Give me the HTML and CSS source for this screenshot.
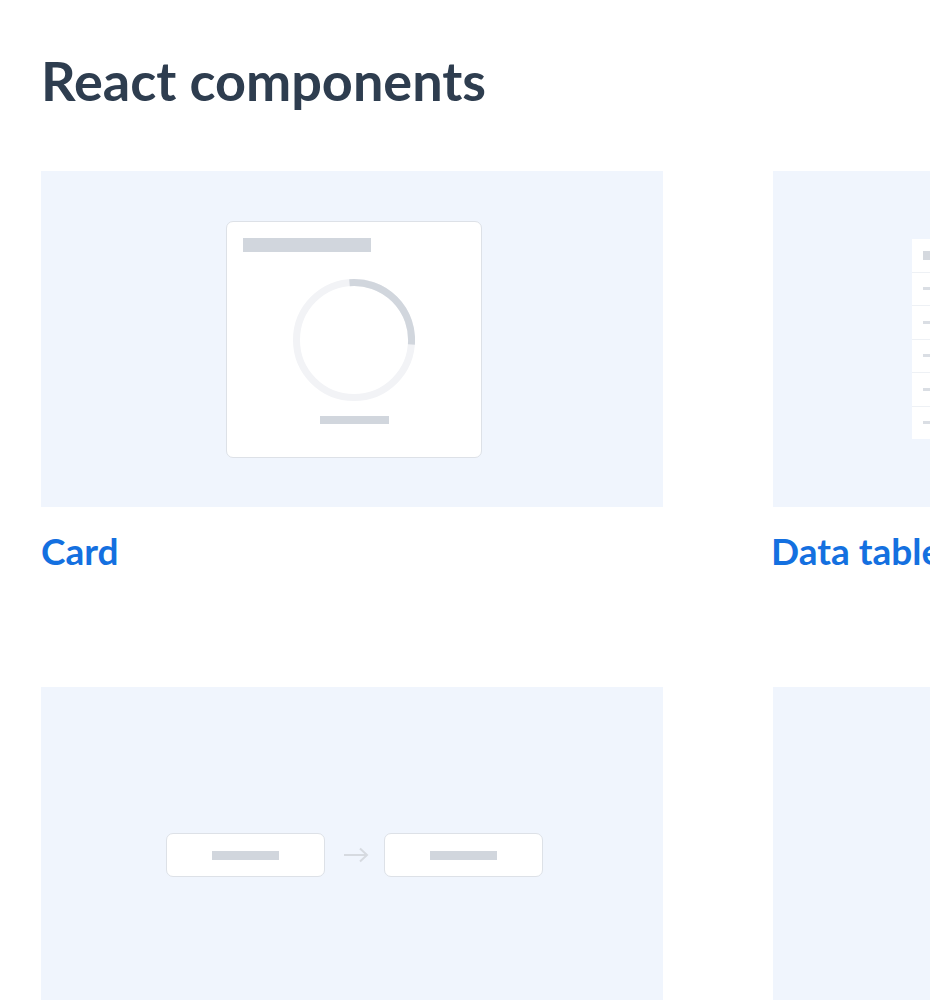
FILE: index.html
```html
<!DOCTYPE html>
<html lang="en">
<head>
<meta charset="utf-8">
<title>React components</title>
<link rel="stylesheet" href="styles.css">
</head>
<body>
<main class="page">
  <h1 class="title">React components</h1>
  <div class="grid">
    <a class="item" href="#">
      <div class="thumb">
        <div class="mock-card">
          <div class="bar bar-title"></div>
          <svg class="ring" width="122" height="122" viewBox="0 0 122 122">
            <circle cx="61" cy="61" r="57.5" fill="none" stroke="#f2f3f6" stroke-width="7"/>
            <path d="M56.5 3.7 A57.5 57.5 0 0 1 118.4 65.5" fill="none" stroke="#d1d6dd" stroke-width="7"/>
          </svg>
          <div class="bar bar-foot"></div>
        </div>
      </div>
      <div class="label">Card</div>
    </a>
    <a class="item" href="#">
      <div class="thumb">
        <div class="mock-table">
          <div class="trow thead"><span class="cell head"></span><span class="cell head"></span><span class="cell head"></span><span class="cell head"></span></div>
          <div class="trow"><span class="cell"></span><span class="cell"></span><span class="cell"></span><span class="cell"></span></div>
          <div class="trow"><span class="cell"></span><span class="cell"></span><span class="cell"></span><span class="cell"></span></div>
          <div class="trow"><span class="cell"></span><span class="cell"></span><span class="cell"></span><span class="cell"></span></div>
          <div class="trow"><span class="cell"></span><span class="cell"></span><span class="cell"></span><span class="cell"></span></div>
          <div class="trow"><span class="cell"></span><span class="cell"></span><span class="cell"></span><span class="cell"></span></div>
        </div>
      </div>
      <div class="label label-right">Data table</div>
    </a>
    <a class="item" href="#">
      <div class="thumb">
        <div class="mock-flow">
          <div class="flow-box"><div class="bar bar-flow"></div></div>
          <svg class="arrow" width="26" height="16" viewBox="0 0 26 16">
            <path d="M1 8 H24 M17 1.5 L24 8 L17 14.5" fill="none" stroke="#d6dae0" stroke-width="2"/>
          </svg>
          <div class="flow-box"><div class="bar bar-flow"></div></div>
        </div>
      </div>
    </a>
    <a class="item" href="#">
      <div class="thumb"></div>
    </a>
  </div>
</main>
</body>
</html>
```

FILE: styles.css
```css
html, body {
  margin: 0;
  padding: 0;
  background: #ffffff;
  overflow: hidden;
}

body {
  font-family: Lato, "Open Sans", "Liberation Sans", sans-serif;
}

.page {
  padding: 54px 0 0 41px;
  width: 1500px;
}

.title {
  margin: 0 0 63px;
  font-size: 54px;
  line-height: 1;
  font-weight: 700;
  color: #2e3d4f;
  letter-spacing: 0;
}

.grid {
  display: grid;
  grid-template-columns: 622px 622px;
  column-gap: 110px;
  row-gap: 118px;
}

.item {
  display: block;
  text-decoration: none;
}

.thumb {
  height: 336px;
  background: #f0f5fd;
  display: flex;
  align-items: center;
  justify-content: center;
}

.label {
  margin-top: 25px;
  font-size: 37px;
  line-height: 1;
  font-weight: 700;
  color: #1470e0;
}

.label-right {
  margin-left: -2px;
}

/* Card mock */
.mock-card {
  box-sizing: border-box;
  width: 256px;
  height: 237px;
  margin-left: 4px;
  background: #ffffff;
  border: 1px solid #dde1e7;
  border-radius: 7px;
  padding: 16px 16px 0;
  display: flex;
  flex-direction: column;
  align-items: center;
}

.bar {
  background: #d1d6dd;
}

.bar-title {
  align-self: flex-start;
  width: 128px;
  height: 14px;
}

.ring {
  display: block;
  margin-top: 27px;
}

.bar-foot {
  width: 69px;
  height: 8px;
  margin-top: 15px;
}

/* Data table mock */
.mock-table {
  width: 344px;
  height: 200px;
  background: #ffffff;
  display: flex;
  flex-direction: column;
}

.trow {
  flex: 1;
  display: flex;
  align-items: center;
  gap: 40px;
  padding: 0 11px;
  border-top: 1px solid #eef1f5;
}

.trow:first-child {
  border-top: none;
}

.cell {
  width: 44px;
  height: 3px;
  background: #dadee4;
}

.cell.head {
  height: 9px;
  background: #d5d9df;
}

/* Flow mock */
.mock-flow {
  display: flex;
  align-items: center;
  margin-left: 4px;
}

.flow-box {
  box-sizing: border-box;
  width: 159px;
  height: 44px;
  background: #ffffff;
  border: 1px solid #dde1e7;
  border-radius: 7px;
  display: flex;
  align-items: center;
  justify-content: center;
}

.bar-flow {
  width: 67px;
  height: 9px;
}

.arrow {
  display: block;
  margin: 0 15px 0 18px;
}
```
